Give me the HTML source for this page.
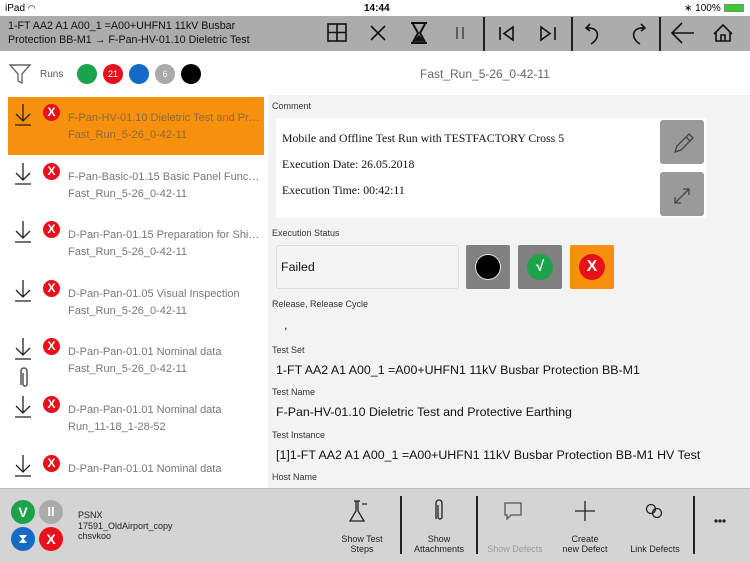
<!DOCTYPE html>
<html><head><meta charset="utf-8"><style>
*{margin:0;padding:0;box-sizing:border-box}
body{width:750px;height:562px;overflow:hidden;background:#fff;font-family:"Liberation Sans",sans-serif;position:relative;color:#222}
.a{position:absolute}
.sb{font-size:10px;color:#000}
.hdr{left:0;top:16px;width:750px;height:35px;background:#acacac}
.ht{left:8px;top:19px;font-size:10.7px;line-height:14px;color:#111}
.vd{width:2px;height:34px;background:#222;top:17px}
.dot{width:20px;height:20px;border-radius:50%;top:64px;color:#fff;font-size:9px;text-align:center;line-height:20px}
.row{width:194px}
.row .t{font-size:11px;color:#777;white-space:nowrap;overflow:hidden;text-overflow:ellipsis}
.xi{width:17px;height:17px;border-radius:50%;background:#e8101a;color:#fff;font-weight:bold;font-size:12px;text-align:center;line-height:17px}
.lbl{font-size:9px;color:#333;left:272px}
.val{font-size:12.4px;color:#111;left:276px}
.gb{background:#9a9a9a;border-radius:3px}
.bt{font-size:9px;text-align:center;color:#222;line-height:10px}
</style></head><body>
<div class="a sb" style="left:5px;top:3px">iPad <span style="font-size:9px">◠</span></div>
<div class="a sb" style="left:364px;top:3px;font-weight:bold">14:44</div>
<div class="a sb" style="left:684px;top:3px">∗ 100% <span style="display:inline-block;width:20px;height:8px;background:#3c3;border:1px solid #888;vertical-align:middle"></span></div>
<div class="a hdr"></div>
<div class="a ht">1-FT AA2 A1 A00_1 =A00+UHFN1 11kV Busbar<br>Protection BB-M1 → F-Pan-HV-01.10 Dieletric Test</div>
<svg class="a" style="left:0;top:16px" width="750" height="35" fill="none" stroke="#111" stroke-width="1.6">
<rect x="328" y="8" width="18" height="17"/><path d="M337 8v17M328 16.5h18"/>
<path d="M371 10l14 14M385 10l-14 14"/>
<path d="M411 7h16M411 27h16M413 8l5 9-5 9M425 8l-5 9 5 9" stroke-width="2"/><path d="M415 25l4-5 4 5z" fill="#111"/>
<path d="M457 11v12M463 11v12" stroke="#333" stroke-width="1.3"/>
<path d="M500 11v13M513 11l-9 6.5 9 6.5z"/>
<path d="M555 11v13M541 11l9 6.5-9 6.5z"/>
<path d="M590 8l-4 4 4 3M587 12c12-1 14 10 4 16"/>
<path d="M641 8l4 4-4 3M644 12c-12-1-14 10-4 16"/>
<path d="M672 17h22M682 7l-10 10 10 10"/>
<path d="M714 18l9-9 9 9M716 16v9h14v-9M721 25v-6h4v6"/>
</svg>
<div class="a vd" style="left:483px"></div><div class="a vd" style="left:571px"></div><div class="a vd" style="left:659px"></div>
<svg class="a" style="left:8px;top:62px" width="24" height="24" fill="none" stroke="#666" stroke-width="1.4"><path d="M2 3h20l-8 9v9l-4-2v-7z"/></svg>
<div class="a" style="left:40px;top:69px;font-size:10px;color:#555">Runs</div>
<div class="a dot" style="left:77px;background:#1aa34a"></div>
<div class="a dot" style="left:103px;background:#e8101a">21</div>
<div class="a dot" style="left:129px;background:#1569c7"></div>
<div class="a dot" style="left:155px;background:#aaa">6</div>
<div class="a dot" style="left:181px;background:#000"></div>
<div class="a" style="left:420px;top:67px;font-size:12px;color:#666">Fast_Run_5-26_0-42-11</div>
<div class="a" style="left:8px;top:97px;width:256px;height:58px;background:#f7900c"></div>
<div class="a" style="left:268px;top:95px;width:482px;height:393px;background:#f3f3f3"></div>
<svg class="a" style="left:0;top:0" width="60" height="488" fill="none" stroke="#222" stroke-width="1.3">
<g id="ar"><path d="M23 104v17M16 114l7 7 7-7M15 125h16"/></g>
<use href="#ar" y="59"/><use href="#ar" y="117"/><use href="#ar" y="176"/><use href="#ar" y="234"/><use href="#ar" y="292"/><use href="#ar" y="351"/>
<path d="M21 385v-14a3 3 0 0 1 6 0v13a2 2 0 0 1-4 0v-11" stroke="#555" stroke-width="1.5"/>
</svg>
<div class="a xi" style="left:43px;top:104px">X</div>
<div class="a xi" style="left:43px;top:163px">X</div>
<div class="a xi" style="left:43px;top:221px">X</div>
<div class="a xi" style="left:43px;top:280px">X</div>
<div class="a xi" style="left:43px;top:338px">X</div>
<div class="a xi" style="left:43px;top:396px">X</div>
<div class="a xi" style="left:43px;top:455px">X</div>
<div class="a row" style="left:68px;top:112px"><div class="t" style="color:#8a6a3a">F-Pan-HV-01.10 Dieletric Test and Protective Earthing</div><div class="t" style="margin-top:5px;color:#8a6a3a">Fast_Run_5-26_0-42-11</div></div>
<div class="a row" style="left:68px;top:171px"><div class="t">F-Pan-Basic-01.15 Basic Panel Functional Test</div><div class="t" style="margin-top:5px">Fast_Run_5-26_0-42-11</div></div>
<div class="a row" style="left:68px;top:229px"><div class="t">D-Pan-Pan-01.15 Preparation for Shipment</div><div class="t" style="margin-top:5px">Fast_Run_5-26_0-42-11</div></div>
<div class="a row" style="left:68px;top:288px"><div class="t">D-Pan-Pan-01.05 Visual Inspection</div><div class="t" style="margin-top:5px">Fast_Run_5-26_0-42-11</div></div>
<div class="a row" style="left:68px;top:346px"><div class="t">D-Pan-Pan-01.01 Nominal data</div><div class="t" style="margin-top:5px">Fast_Run_5-26_0-42-11</div></div>
<div class="a row" style="left:68px;top:404px"><div class="t">D-Pan-Pan-01.01 Nominal data</div><div class="t" style="margin-top:5px">Run_11-18_1-28-52</div></div>
<div class="a row" style="left:68px;top:463px"><div class="t">D-Pan-Pan-01.01 Nominal data</div></div>
<div class="a lbl" style="top:101px">Comment</div>
<div class="a" style="left:276px;top:118px;width:430px;height:100px;background:#fff"></div>
<div class="a" style="left:282px;top:125px;font-family:'Liberation Serif',serif;font-size:11.8px;line-height:26px;color:#111">Mobile and Offline Test Run with TESTFACTORY Cross 5<br>Execution Date: 26.05.2018<br>Execution Time: 00:42:11</div>
<div class="a gb" style="left:660px;top:120px;width:44px;height:44px"></div>
<div class="a gb" style="left:660px;top:172px;width:44px;height:44px"></div>
<svg class="a" style="left:660px;top:120px" width="44" height="96" fill="none" stroke="#444" stroke-width="1.3">
<path d="M15 32l2-6 12-12 4 4-12 12zM26 17l4 4"/>
<path d="M15 83l14-14M15 77v6h6M29 75v-6h-6"/>
</svg>
<div class="a lbl" style="top:228px">Execution Status</div>
<div class="a" style="left:276px;top:245px;width:183px;height:44px;background:#f5f5f5;border:1px solid #ddd;border-radius:3px"></div>
<div class="a val" style="left:281px;top:260px">Failed</div>
<div class="a" style="left:466px;top:245px;width:44px;height:44px;background:#808080;border-radius:2px"></div>
<div class="a" style="left:475px;top:254px;width:26px;height:26px;border-radius:50%;background:#000;border:1px solid #ddd"></div>
<div class="a" style="left:518px;top:245px;width:44px;height:44px;background:#808080;border-radius:2px"></div>
<div class="a" style="left:527px;top:254px;width:26px;height:26px;border-radius:50%;background:#1aa34a;color:#fff;font-weight:bold;font-size:15px;text-align:center;line-height:26px">√</div>
<div class="a" style="left:570px;top:245px;width:44px;height:44px;background:#f7900c;border-radius:2px"></div>
<div class="a" style="left:579px;top:254px;width:26px;height:26px;border-radius:50%;background:#e8101a;color:#fff;font-weight:bold;font-size:16px;text-align:center;line-height:26px">X</div>
<div class="a lbl" style="top:299px">Release, Release Cycle</div>
<div class="a val" style="left:284px;top:318px">,</div>
<div class="a lbl" style="top:345px">Test Set</div>
<div class="a val" style="top:363px">1-FT AA2 A1 A00_1 =A00+UHFN1 11kV Busbar Protection BB-M1</div>
<div class="a lbl" style="top:387px">Test Name</div>
<div class="a val" style="top:405px">F-Pan-HV-01.10 Dieletric Test and Protective Earthing</div>
<div class="a lbl" style="top:430px">Test Instance</div>
<div class="a val" style="top:448px">[1]1-FT AA2 A1 A00_1 =A00+UHFN1 11kV Busbar Protection BB-M1 HV Test</div>
<div class="a lbl" style="top:472px">Host Name</div>
<div class="a" style="left:0;top:488px;width:750px;height:74px;background:#d4d4d4;border-top:1px solid #bbb"></div>
<div class="a" style="left:11px;top:500px;width:24px;height:24px;border-radius:50%;background:#1aa34a;color:#fff;font-weight:bold;text-align:center;line-height:24px;font-size:14px">V</div>
<div class="a" style="left:39px;top:500px;width:24px;height:24px;border-radius:50%;background:#aaa;color:#fff;font-weight:bold;text-align:center;line-height:24px;font-size:13px">II</div>
<div class="a" style="left:11px;top:527px;width:24px;height:24px;border-radius:50%;background:#1569c7;color:#fff;text-align:center;line-height:24px;font-size:13px">⧗</div>
<div class="a" style="left:39px;top:527px;width:24px;height:24px;border-radius:50%;background:#e8101a;color:#fff;font-weight:bold;text-align:center;line-height:24px;font-size:14px">X</div>
<div class="a" style="left:78px;top:510px;font-size:9px;line-height:10.5px;color:#222">PSNX<br>17591_OldAirport_copy<br>chsvkoo</div>
<svg class="a" style="left:330px;top:495px" width="420" height="30" fill="none" stroke="#222" stroke-width="1.3">
<path d="M26 6v10l-6 10h14l-6-10V6M24 6h6M32 9l5 0" />
<path d="M106 24V8a3 3 0 0 1 6 0v14a2 2 0 0 1-4 0V10"/>
<path d="M175 8h16v12h-10l-4 4v-4h-2z" stroke="#555"/>
<path d="M255 6v20M245 16h20"/>
<circle cx="321" cy="14" r="4.5"/><circle cx="327" cy="18" r="4.5"/>
<circle cx="390" cy="26" r="1" fill="#222"/><circle cx="394" cy="26" r="1" fill="#222"/><circle cx="386" cy="26" r="1" fill="#222"/>
</svg>
<div class="a" style="left:400px;top:496px;width:2px;height:58px;background:#222"></div>
<div class="a" style="left:476px;top:496px;width:2px;height:58px;background:#222"></div>
<div class="a" style="left:693px;top:496px;width:2px;height:58px;background:#222"></div>
<div class="a bt" style="left:332px;top:534px;width:60px">Show Test<br>Steps</div>
<div class="a bt" style="left:406px;top:534px;width:66px">Show<br>Attachments</div>
<div class="a bt" style="left:482px;top:544px;width:66px;color:#999">Show Defects</div>
<div class="a bt" style="left:555px;top:534px;width:60px">Create<br>new Defect</div>
<div class="a bt" style="left:622px;top:544px;width:66px">Link Defects</div>
</body></html>
